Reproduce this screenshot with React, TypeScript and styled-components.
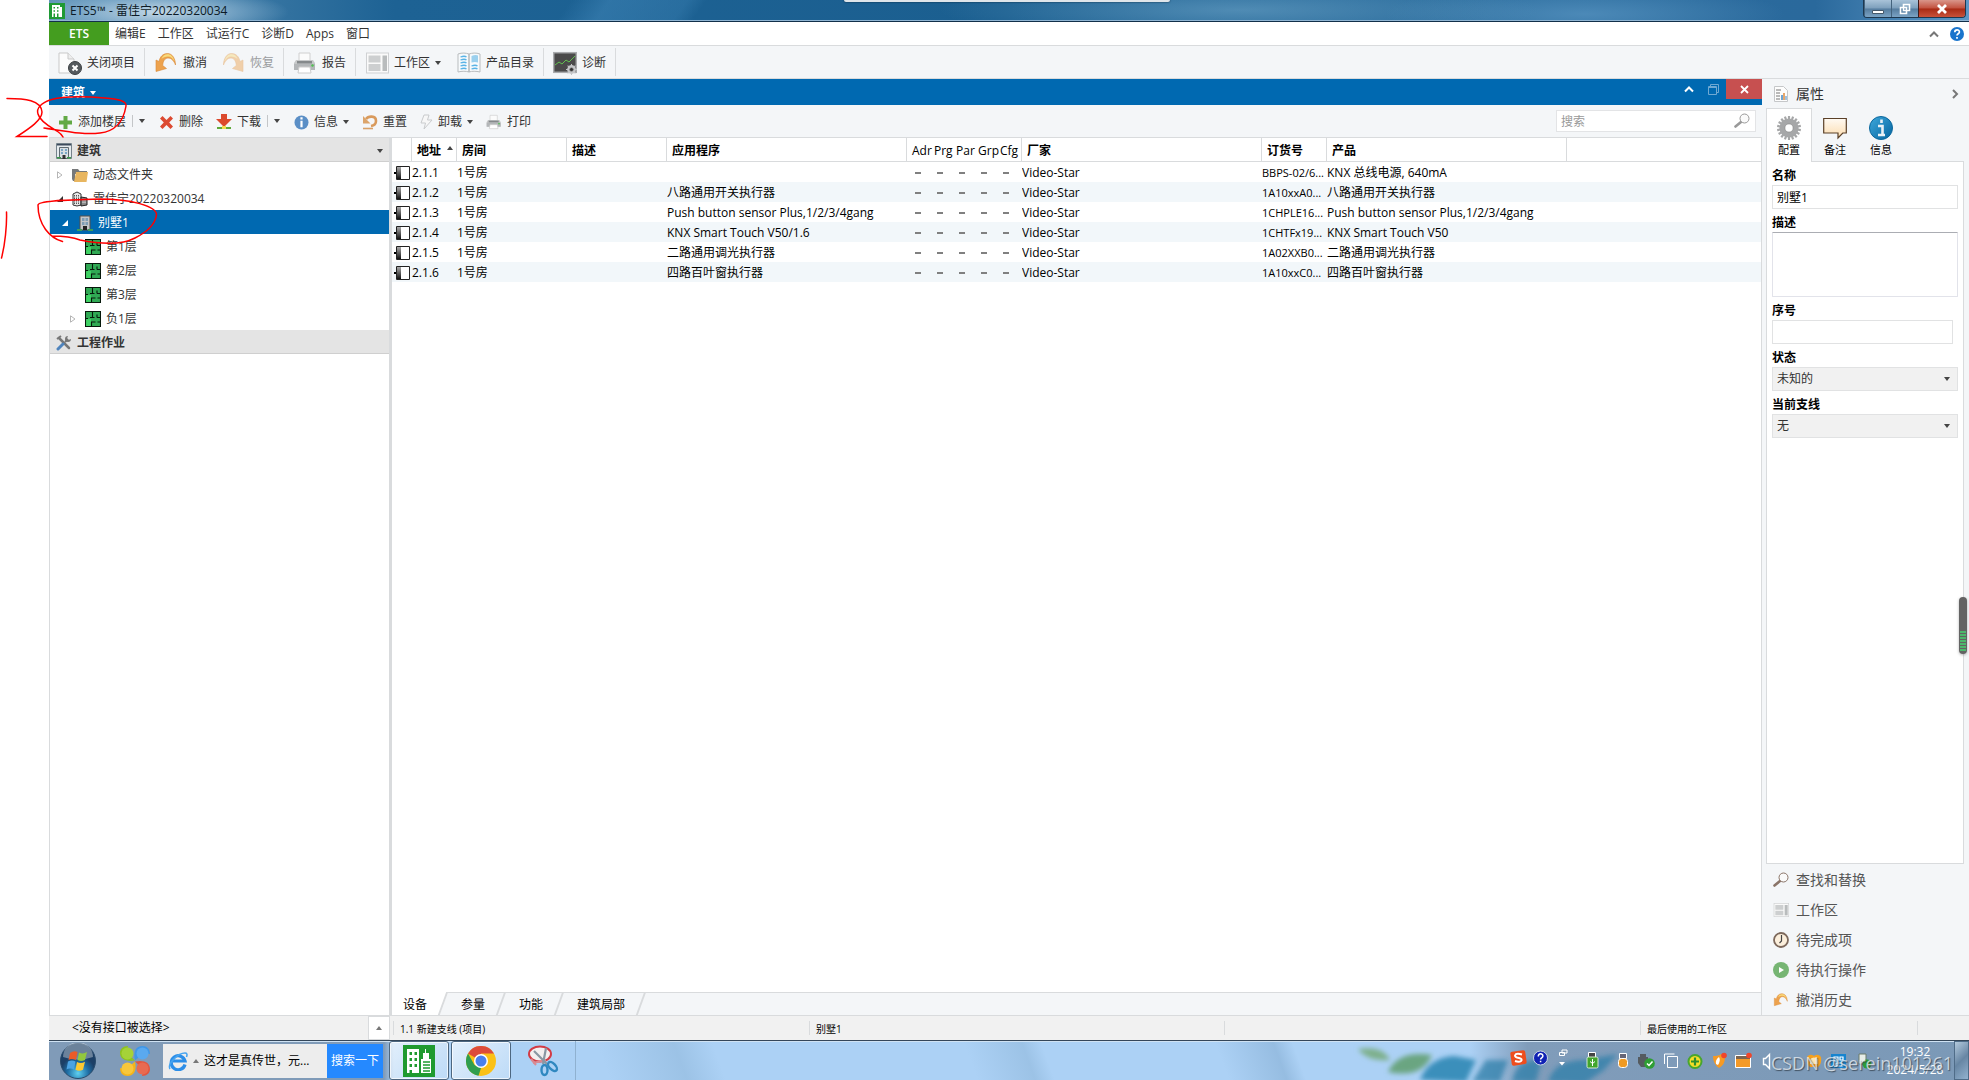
import React from 'react';
import styled, { createGlobalStyle, css } from 'styled-components';

const line = '#d9dbdd';
const panel = '#f4f6f8';
const blue = '#0069b1';

const Global = createGlobalStyle`
  * { box-sizing: border-box; }
  html, body { margin: 0; padding: 0; background: #fff; }
  body, button, input, textarea, select {
    font-family: "Open Sans", "Noto Sans CJK SC", sans-serif;
    font-size: 12px;
    line-height: 16px;
    color: #333;
  }
  button { border: 0; padding: 0; background: none; white-space: nowrap; }
  svg { display: block; flex: none; }
`;

const Page = styled.div`
  position: relative;
  display: flex;
  flex-direction: column;
  height: 100vh;
  padding-left: 49px;
  overflow: hidden;
`;

/* ---------- window frame ---------- */
const TitleBar = styled.header`
  display: flex;
  align-items: flex-start;
  flex: none;
  height: 22px;
  position: relative;
  border-bottom: 1px solid #12304a;
  box-shadow: inset 0 -1px 0 #8fb4d2;
  background:
    radial-gradient(ellipse 130px 24px at 110px 12px, rgba(215, 230, 240, .85), rgba(160, 195, 220, .5) 60%, transparent),
    linear-gradient(125deg, transparent 27%, rgba(70, 140, 190, .45) 29%, rgba(70, 140, 190, .3) 33%, transparent 34%),
    radial-gradient(ellipse 300px 30px at 62% 10px, rgba(110, 165, 200, .6), transparent),
    radial-gradient(ellipse 200px 30px at 80% 14px, rgba(90, 150, 195, .7), transparent),
    linear-gradient(90deg, #5f93b8, #1d6294 18%, #1b5f90 50%, #2a6c9d 75%, #2a699c 92%, #5d97c6);
`;
const AppTitle = styled.h1`
  display: flex;
  align-items: center;
  gap: 5px;
  margin: 0;
  padding-top: 3px;
  font-size: 12px;
  line-height: 16px;
  font-weight: 400;
  color: #0c1a26;
`;
const WindowButtons = styled.div`
  display: flex;
  height: 18px;
  margin: 0 3px 0 auto;
  border: 1px solid #1d3850;
  border-top: 0;
  border-radius: 0 0 4px 4px;
  overflow: hidden;
`;
const WindowButton = styled.button<{ $close?: boolean }>`
  display: flex;
  align-items: center;
  justify-content: center;
  width: ${p => (p.$close ? 47 : 27)}px;
  border-left: ${p => (p.$close ? '1px solid #3d1a1a' : '1px solid #44637d')};
  background: ${p => p.$close
    ? 'linear-gradient(#d9968a, #c2513e 48%, #a82a14 52%, #c8523a)'
    : 'linear-gradient(#a9c3d8, #7d9fbc 48%, #557c9e 52%, #7ba3c4)'};
`;
const RemoteTab = styled.div`
  position: absolute;
  top: 0;
  left: 41.4%;
  width: 326px;
  height: 2px;
  background: #dfe5ea;
  border-radius: 0 0 4px 4px;
  box-shadow: 0 0 2px #0b2438;
`;

/* ---------- menu + ribbon ---------- */
const MenuBar = styled.nav`
  display: flex;
  align-items: center;
  flex: none;
  height: 24px;
  border-bottom: 1px solid ${line};
`;
const EtsButton = styled.button`
  align-self: stretch;
  width: 60px;
  padding-top: 1px;
  background: #449d1f;
  color: #fff;
  font-weight: 600;
`;
const MenuItem = styled.button`padding: 0 6px;`;
const MenuItems = styled.div`display: flex;`;
const MenuEnd = styled.div`
  display: flex;
  align-items: center;
  gap: 11px;
  margin-left: auto;
  padding-right: 5px;
`;
const Ribbon = styled.div`
  display: flex;
  align-items: stretch;
  flex: none;
  height: 33px;
  padding: 2px 0;
  background: ${panel};
  border-bottom: 1px solid ${line};
`;
const Caret = styled.span`
  flex: none;
  border: 3px solid transparent;
  border-top: 4px solid #444;
  border-bottom: 0;
  width: 0;
  height: 0;
`;
const RibbonGroup = styled.div`
  display: flex;
  padding: 0 2px;
  border-right: 1px solid ${line};
`;
const RibbonButton = styled.button`
  display: flex;
  align-items: center;
  gap: 5px;
  padding: 2px 7px 0;
  &:disabled { color: #9a9c9e; }
  ${Caret} { margin-right: 2px; }
`;

/* ---------- dock ---------- */
const Dock = styled.div`
  display: grid;
  grid-template-columns: minmax(0, 1fr) 207px;
  flex: 1;
  min-height: 0;
`;
const Building = styled.main`
  display: flex;
  flex-direction: column;
  min-width: 0;
  min-height: 0;
`;
const PanelTitle = styled.div`
  display: flex;
  align-items: flex-start;
  flex: none;
  height: 26px;
  background: ${blue};
  color: #fff;
`;
const PanelName = styled.button`
  display: flex;
  align-items: center;
  gap: 5px;
  padding: 6px 12px 0;
  font-weight: 700;
  color: #fff;
  ${Caret} { border-top-color: #fff; }
`;
const PanelActions = styled.div`
  display: flex;
  align-items: center;
  margin-left: auto;
`;
const PanelAction = styled.button<{ $close?: boolean }>`
  display: flex;
  align-items: center;
  justify-content: center;
  width: ${p => (p.$close ? 36 : 25)}px;
  height: 20px;
  background: ${p => (p.$close ? '#c75050' : 'transparent')};
`;
const Tools = styled.div`
  display: flex;
  align-items: center;
  flex: none;
  height: 33px;
  padding: 0 6px 0 2px;
  background: ${panel};
  border-bottom: 1px solid ${line};
`;
const Tool = styled.button`
  display: flex;
  align-items: center;
  gap: 5px;
  padding: 2px 6px 0 7px;
`;
const Split = styled.button`
  display: flex;
  align-items: center;
  height: 12px;
  padding: 0 7px 0 6px;
  border-left: 1px solid #c4c6c8;
`;
const SearchBox = styled.label`
  display: flex;
  align-items: center;
  width: 200px;
  height: 22px;
  margin-left: auto;
  padding: 0 5px 0 4px;
  background: #fff;
  border: 1px solid #e3e4e6;
`;
const SearchInput = styled.input`
  flex: 1;
  min-width: 0;
  padding: 1px 0 0;
  border: 0;
  outline: 0;
  background: none;
  &::placeholder { color: #999; opacity: 1; }
`;
const Workspace = styled.div`
  display: grid;
  grid-template-columns: 340px 3px minmax(0, 1fr);
  flex: 1;
  min-height: 0;
`;
const Tree = styled.aside`
  border-left: 1px solid ${line};
`;
const Divider = styled.div`background: ${line};`;
const TreeHeader = styled.h2`
  display: flex;
  align-items: center;
  gap: 5px;
  height: 24px;
  margin: 0;
  padding: 2px 6px 0;
  background: #e4e4e4;
  border-bottom: 1px solid #cfcfcf;
  font-size: 12px;
  line-height: 16px;
  font-weight: 700;
  ${Caret} { margin-left: auto; }
`;
const TreeList = styled.ul`
  margin: 0;
  padding: 0;
  list-style: none;
`;
const TreeItem = styled.li<{ $level: number; $selected?: boolean }>`
  display: flex;
  align-items: center;
  gap: 5px;
  height: 24px;
  padding-top: 2px;
  padding-left: ${p => [6, 11, 19][p.$level]}px;
  ${p => p.$selected && css`background: ${blue}; color: #fff;`}
`;
const Toggle = styled.span`width: 11px;`;

const Devices = styled.section`
  display: flex;
  flex-direction: column;
  min-width: 0;
  border-right: 1px solid ${line};
`;
const TableArea = styled.div`flex: 1; min-height: 0; overflow: hidden;`;
const Table = styled.table`
  width: 100%;
  table-layout: fixed;
  border-collapse: separate;
  border-spacing: 0;
  color: #000;
  td, th { padding: 2px 0 0; text-align: left; white-space: nowrap; overflow: hidden; }
`;
const Th = styled.th<{ $plain?: boolean; $open?: boolean }>`
  height: 24px;
  border-bottom: 1px solid ${line};
  border-right: ${p => (p.$open ? '0' : `1px solid ${line}`)};
  font-weight: ${p => (p.$plain ? 400 : 700)};
  && { padding-left: 5px; overflow: visible; }
`;
const Row = styled.tr`
  height: 20px;
  &:nth-child(even) { background: #f2f7fa; }
  td:first-child svg { margin-left: 2px; }
`;
const OrderCell = styled.td`font-size: 11px;`;
const Flag = styled.td`
  && { padding-left: 8px; }
`;
const Dash = styled.span`
  display: block;
  width: 6px;
  height: 2px;
  background: #808080;
`;
const Sort = styled.span`
  display: inline-block;
  margin: 0 0 5px 6px;
  border: 3px solid transparent;
  border-bottom: 4px solid #444;
  border-top: 0;
`;
const Tabs = styled.div`
  display: flex;
  flex: none;
  height: 23px;
  background: ${panel};
  box-shadow: inset 0 1px 0 ${line};
  overflow: hidden;
`;
const Tab = styled.button<{ $active?: boolean }>`
  position: relative;
  z-index: 0;
  padding: 2px 17px 0;
  color: #000;
  &:first-child { padding-left: 11px; }
  &::before {
    content: '';
    position: absolute;
    z-index: -1;
    inset: 0 0 0 -6px;
    border-right: 2px solid ${line};
    background: ${p => (p.$active ? '#fff' : 'transparent')};
    transform: skewX(-20deg);
  }
`;

/* ---------- properties ---------- */
const Side = styled.aside`
  display: flex;
  flex-direction: column;
  min-height: 0;
  padding: 0 5px 0 4px;
  background: ${panel};
`;
const SideTitle = styled.div`
  display: flex;
  align-items: center;
  gap: 7px;
  height: 29px;
  padding: 1px 4px 0 7px;
  font-size: 14px;
  svg:last-child { margin-left: auto; }
`;
const SideTabs = styled.div`
  display: flex;
  position: relative;
  z-index: 1;
  margin-bottom: -1px;
`;
const SideTab = styled.button<{ $active?: boolean }>`
  display: flex;
  flex-direction: column;
  align-items: center;
  gap: 2px;
  width: 46px;
  height: 54px;
  padding-top: 7px;
  font-size: 11px;
  color: #000;
  border: 1px solid ${p => (p.$active ? line : 'transparent')};
  border-bottom: 0;
  background: ${p => (p.$active ? '#fff' : 'transparent')};
`;
const Form = styled.form`
  display: flex;
  flex-direction: column;
  flex: 1;
  min-height: 0;
  padding: 4px 5px 0;
  background: #fff;
  border: 1px solid ${line};
`;
const FieldLabel = styled.label`
  height: 19px;
  padding-top: 2px;
  line-height: 16px;
  font-weight: 700;
  color: #000;
`;
const box = css`
  width: 100%;
  height: 24px;
  margin: 0 0 4px;
  padding: 0 4px;
  border: 1px solid #e1e2e3;
  border-radius: 0;
  background: #fff;
  outline: 0;
  color: #000;
  flex: none;
`;
const TextField = styled.input<{ $short?: boolean }>`
  ${box}
  ${p => p.$short && css`width: calc(100% - 5px);`}
`;
const NoteField = styled.textarea`
  ${box}
  height: 65px;
  resize: none;
  border-color: #abadb3 #e2e3ea #e2e3ea;
  border-radius: 1px;
`;
const SelectWrap = styled.div`
  position: relative;
  height: 28px;
  ${Caret} {
    position: absolute;
    right: 8px;
    top: 10px;
    pointer-events: none;
  }
`;
const Select = styled.select`
  ${box}
  appearance: none;
  background: #f1f1f1;
  color: #333;
`;
const SideLinks = styled.nav`
  display: flex;
  flex-direction: column;
  padding-top: 1px;
`;
const SideLink = styled.button`
  display: flex;
  align-items: center;
  gap: 7px;
  height: 30px;
  padding-left: 7px;
  font-size: 14px;
  color: #555;
`;

/* ---------- status bar ---------- */
const Status = styled.footer`
  display: flex;
  flex: none;
  height: 25px;
  background: #f1f1f1;
  border-top: 1px solid ${line};
  color: #000;
`;
const Interface = styled.div`
  display: flex;
  align-items: center;
  width: 344px;
  padding-left: 23px;
`;
const UpButton = styled.button`
  display: flex;
  align-items: center;
  justify-content: center;
  width: 22px;
  height: 24px;
  margin: 0 3px 0 auto;
  background: #fff;
  border: 1px solid ${line};
`;
const UpCaret = styled.span`
  border: 3px solid transparent;
  border-bottom: 4px solid #777;
  border-top: 0;
`;
const StatusCell = styled.div<{ $w: number }>`
  flex: ${p => p.$w} 1 0;
  height: 14px;
  margin-top: 5px;
  padding-left: 6px;
  border-left: 1px solid ${line};
  font-size: 10px;
  line-height: 16px;
  white-space: nowrap;
`;

/* ---------- taskbar ---------- */
const Taskbar = styled.footer`
  position: relative;
  display: flex;
  align-items: center;
  flex: none;
  height: 40px;
  border-top: 1px solid #344659;
  box-shadow: inset 0 1px 0 #cfe2f3;
  background:
    linear-gradient(90deg, #809bb8 335px, transparent 345px),
    linear-gradient(70deg, transparent 29%, rgba(140, 180, 215, .5) 33%, transparent 35%),
    linear-gradient(70deg, transparent 48%, rgba(140, 180, 215, .5) 51%, transparent 52%),
    linear-gradient(70deg, transparent 61%, rgba(135, 175, 212, .6) 64%, transparent 65%),
    linear-gradient(90deg, #acd1f5 74%, #809cba 77%, #7b99b7);
`;
const Scenery = styled.svg`
  position: absolute;
  top: 1px;
  right: 0;
`;
const Launchers = styled.div`
  position: relative;
  display: flex;
  align-items: center;
`;
const IconButton = styled.button`display: flex; justify-content: center; width: 57px;`;
const NewsBar = styled.div`
  display: flex;
  align-items: center;
  width: 220px;
  height: 34px;
  margin-right: 6px;
  background: #ededed;
  color: #000;
`;
const NewsText = styled.a`
  display: flex;
  align-items: center;
  gap: 5px;
  flex: 1;
  padding-left: 5px;
  color: #000;
  text-decoration: none;
  white-space: nowrap;
`;
const NewsButton = styled.button`
  width: 56px;
  height: 34px;
  background: #2589ff;
  color: #fff;
`;
const TaskButton = styled.button<{ $open?: boolean }>`
  display: flex;
  align-items: center;
  justify-content: center;
  width: 60px;
  height: 39px;
  margin-right: 2px;
  ${p => p.$open && css`
    border: 1px solid #4d6780;
    border-radius: 3px;
    box-shadow: inset 0 0 0 1px rgba(255, 255, 255, .7);
    background: linear-gradient(135deg, rgba(255, 255, 255, .65), rgba(220, 236, 250, .35));
  `}
`;
const Running = styled.div`
  position: relative;
  display: flex;
  border-right: 1px solid #8fb1d0;
`;
const Tray = styled.div`
  position: relative;
  display: flex;
  align-items: center;
  height: 100%;
  margin-left: auto;
`;
const Clock = styled.time`
  width: 78px;
  text-align: center;
  color: #fff;
  line-height: 18px;
`;
const ShowDesktop = styled.button`
  width: 15px;
  height: 100%;
  border: 1px solid #4f6c88;
  background: linear-gradient(135deg, #b3c9dd, #6786a4 50%, #93b2cf);
`;
const Watermark = styled.div`
  position: absolute;
  right: 16px;
  bottom: 5px;
  font-size: 18px;
  line-height: 24px;
  color: rgba(235, 240, 245, .75);
  text-shadow: 1px 1px 1px rgba(40, 50, 60, .7);
`;
const Ink = styled.svg`
  position: absolute;
  left: 0;
  top: 0;
  pointer-events: none;
`;
const Meter = styled.div`
  position: absolute;
  right: 2px;
  top: 597px;
  width: 8px;
  height: 57px;
  border-radius: 4px;
  background:
    repeating-linear-gradient(transparent 0 2px, #636363 2px 3px) 1px 34px / 6px 20px no-repeat,
    linear-gradient(#4cb76b, #4cb76b) 1px 34px / 6px 20px no-repeat,
    #636363;
  box-shadow: 0 1px 3px rgba(0, 0, 0, .3);
`;

/* ---------- icons ---------- */
const EtsLogo = ({ size = 16 }: { size?: number }) => (
  <svg width={size} height={size} viewBox="0 0 16 16">
    <rect width="16" height="16" fill="#1f9a35" />
    <path fill="#fff" fillRule="evenodd" d="M3 2h8v2h2v10H3zM4.500 4v1.500h1.500V4zm3.500 0v1.500h1.500V4zM4.500 7.200v1.500h1.500V7.200zm3.500 0v1.500h1.500V7.200zM4.500 10.500V14h1.500v-3.500zM8 10.500V14h1.500v-3.500z" />
  </svg>
);
const EtsLarge = () => (
  <svg width="32" height="32" viewBox="0 0 32 32">
    <rect width="32" height="32" fill="#1f9a2f" />
    <path fill="#fff" fillRule="evenodd" d="M4 4h12v24H4zM6.500 7v3h2.500V7zm5 0v3H14V7zm-5 6v3h2.500v-3zm5 0v3H14v-3zm-5 6v3h2.500v-3zm5 0v3H14v-3zm-5 6v3h2.500v-3zM22 4h1v4h3v6h2v14H18V14h2V8h2z" />
    <path stroke="#1f9a2f" strokeWidth="1.500" d="M20 17h7M20 20h7M20 23h7M20 26h7" />
  </svg>
);
const CloseProject = () => (
  <svg width="24" height="24" viewBox="0 0 24 24">
    <path d="M1 2h9l6 6v14H1z" fill="#fcfcfc" stroke="#c9c9c9" />
    <path d="M10 2v6h6" fill="#eee" stroke="#c9c9c9" />
    <circle cx="17" cy="17" r="6.500" fill="#555a5e" stroke="#3c4043" />
    <path d="M14.500 14.500l5 5m0-5l-5 5" stroke="#fff" strokeWidth="2" />
  </svg>
);
const UndoIcon = ({ s = 24, flip, faded }: { s?: number; flip?: boolean; faded?: boolean }) => (
  <svg width={s} height={s} viewBox="0 0 24 24" opacity={faded ? 0.45 : 1}>
    <g transform={flip ? 'matrix(-1 0 0 1 24 0)' : undefined}>
      <path d="M21.500 14c0-6-3-11.500-8-11.500-4.500 0-7.500 3-8.500 8L2 9v11.500l10.500-3-3.800-3c.3-4.500 2.300-7.500 5.300-7.500 3.500 0 6 3 7.500 7z" fill="#eda24d" stroke="#d98a35" strokeWidth=".6" />
      <path d="M7.500 8c1-3 3-4.700 6-4.700 3.500 0 6 2.700 7 7.200-1.500-3-3.500-5-6.500-5S9 6.500 7.500 8z" fill="#f8dc7c" />
    </g>
  </svg>
);
const Printer = ({ s = 24 }: { s?: number }) => (
  <svg width={s} height={s} viewBox="0 0 24 24">
    <path d="M6 2h11v8H6z" fill="#fbfbfb" stroke="#d0d0d0" />
    <path d="M3 9h17l2 3v7H1v-7z" fill="#c6c8c9" />
    <path d="M1 13h21v6H1z" fill="#b3b6b8" />
    <path d="M4 10h15v2.500H4z" fill="#85898b" />
    <circle cx="19.500" cy="14.500" r="1.200" fill="#4ec04e" />
    <path d="M6 16h11l1 6H5z" fill="#fff" stroke="#ccc" />
  </svg>
);
const LayoutIcon = ({ s = 24 }: { s?: number }) => (
  <svg width={s} height={s} viewBox="0 0 24 24">
    <rect x="1.500" y="2" width="22" height="20" fill="#fafafa" stroke="#cfd1d3" />
    <path d="M3.500 4.500h12v7h-12zM3.500 13h12v7h-12z" fill="#cdcfd0" />
    <path d="M17.500 4.500h4.500v15.500h-4.500z" fill="#b9bcbd" />
  </svg>
);
const Catalog = () => (
  <svg width="24" height="24" viewBox="0 0 24 24">
    <path d="M1 3c4-1.500 8-1 11 0 3-1 7-1.500 11 0v18c-4-1-8-1-11 0-3-1-7-1-11 0z" fill="#f7fafc" stroke="#b9bcbe" />
    <path d="M12 3v18" stroke="#b5b8ba" strokeWidth="1.500" />
    <path d="M3.500 6q4-1.500 6 0M3.500 9q4-1.500 6 0M3.500 12q4-1.500 6 0M3.500 15q4-1.500 6 0M3.500 18q4-1.500 6 0M14.500 15q4-1.500 6 0M14.500 18q4-1.500 6 0" fill="none" stroke="#59b3e6" strokeWidth="1.300" />
    <path d="M14.500 5q4-1.500 6.500-.5v7q-3-1-6.500 0z" fill="#9bd0ee" />
  </svg>
);
const GearShape = ({ cx, cy, r, fill, hole, teeth = 12 }: { cx: number; cy: number; r: number; fill: string; hole: string; teeth?: number }) => (
  <g>
    {Array.from({ length: teeth }, (_, i) => (
      <rect key={i} x={cx - r * 0.09} y={cy - r} width={r * 0.18} height={r * 0.4} fill={fill} transform={`rotate(${(i * 360) / teeth} ${cx} ${cy})`} />
    ))}
    <circle cx={cx} cy={cy} r={r * 0.8} fill={fill} />
    <circle cx={cx} cy={cy} r={r * 0.34} fill={hole} stroke="#888" strokeWidth=".6" />
  </g>
);
const Diagnose = () => (
  <svg width="24" height="24" viewBox="0 0 24 24">
    <rect x=".7" y="1.700" width="22.600" height="19.600" fill="#4a4a4a" stroke="#a9abad" strokeWidth="1.500" />
    <path d="M2 14l4-3 3 2 4-4 3 2 6-6" fill="none" stroke="#62c050" />
    <GearShape cx={18.5} cy={18.5} r={5.5} fill="#c4c6c8" hole="#333" teeth={8} />
  </svg>
);
const Plus = () => (
  <svg width="15" height="15" viewBox="0 0 15 15"><path d="M5.500 1h4v4.500H14v4H9.500V14h-4V9.500H1v-4h4.500z" fill="#62a945" /></svg>
);
const Cross = () => (
  <svg width="15" height="15" viewBox="0 0 15 15"><path d="M3.500 1L7.500 5l4-4L14 3.500l-3.800 4L14 11.500 11.500 14l-4-4-4 4L1 11.500l3.800-4L1 3.500z" fill="#dc4a31" /></svg>
);
const Download = () => (
  <svg width="16" height="16" viewBox="0 0 16 16">
    <path d="M5 0h6v5h5l-8 8-8-8h5z" fill="#dc4a2e" />
    <path d="M1 14h14" stroke="#5faa3c" strokeWidth="2" /><path d="M6 12h4v3H6z" fill="#f1de50" />
  </svg>
);
const InfoSmall = () => (
  <svg width="15" height="15" viewBox="0 0 15 15"><circle cx="7.500" cy="7.500" r="7" fill="#5b8fc6" /><path d="M7.500 2.200v2.200M7.500 5.800v6.500" stroke="#fff" strokeWidth="2.200" /></svg>
);
const Reset = () => (
  <svg width="16" height="16" viewBox="0 0 16 16"><path d="M1 14.500h10" stroke="#d9a066" strokeWidth="1.600" /><path d="M4 5c2-3 10-4 10 2 0 3-2 4.500-5 5" fill="none" stroke="#d99a5c" strokeWidth="2.600" /><path d="M1 2v7.500h7.500z" fill="#dca46a" /></svg>
);
const Bolt = () => (
  <svg width="13" height="16" viewBox="0 0 13 16"><path d="M4 1h5L7.500 6H12L4 15l1.500-6H1z" fill="#f7f7f7" stroke="#c9cbcd" /></svg>
);
const Magnifier = ({ tint = '#999' }: { tint?: string }) => (
  <svg width="16" height="16" viewBox="0 0 16 16"><path d="M1.500 13.500L7 9" stroke={tint} strokeWidth="2.600" strokeLinecap="round" /><circle cx="10.500" cy="5.500" r="4.500" fill="#fafafa" stroke={tint} /></svg>
);
const Chevron = ({ dir, c = '#777' }: { dir: 'up' | 'right'; c?: string }) => (
  <svg width="10" height="10" viewBox="0 0 10 10"><path d={dir === 'up' ? 'M1 7.500L5 3.500l4 4' : 'M3 1l4 4-4 4'} fill="none" stroke={c} strokeWidth="2" /></svg>
);
const Help = () => (
  <svg width="14" height="14" viewBox="0 0 14 14"><circle cx="7" cy="7" r="7" fill="#1a74cc" /><path d="M4.800 5.200c0-3 4.600-3 4.600-.3C9.400 6.700 7 6.700 7 8.500M7 10v1.800" fill="none" stroke="#fff" strokeWidth="1.700" /></svg>
);
const BuildingFrame = () => (
  <svg width="16" height="16" viewBox="0 0 16 16">
    <path d="M.5.500h15v15H.5z" fill="#e6ebee" stroke="#75828b" /><path d="M1 1h14v1.500H1z" fill="#3c4a5c" />
    <path d="M3.500 4.500h9v11h-9z" fill="#d8dee2" stroke="#5f6a72" /><path d="M5 6h2v2H5zm4 0h2v2H9zM5 9h2v2H5zm4 0h2v2H9z" fill="#7ba7c7" />
    <path d="M6.500 12h3v4h-3z" fill="#333" /><path d="M1 14h4v1.500H1zm10 0h4v1.500h-4z" fill="#3c9a4a" />
  </svg>
);
const Tower = () => (
  <svg width="16" height="16" viewBox="0 0 16 16">
    <path d="M3 1h10v14H3z" fill="#c3c6c9" stroke="#55504c" /><path d="M5 3h2.500v3H5zm3.500 0H11v3H8.500zM5 7h2.500v3H5zm3.500 0H11v3H8.500z" fill="#7e9db5" />
    <path d="M6 11h4v4H6z" fill="#222" /><path d="M0 14h5v2H0zm11 0h5v2h-5z" fill="#3e9c5c" />
  </svg>
);
const City = () => (
  <svg width="16" height="16" viewBox="0 0 16 16">
    <path d="M1 3l4-2 4 2v11l-4 1-4-1z" fill="#e8e8e8" stroke="#333" /><path d="M9 6l6 1v7l-6 1z" fill="#8a8a8a" stroke="#222" />
    <path d="M2.500 4v9M4.500 4v9M6.500 4v9" stroke="#555" strokeDasharray="1.500 1" /><path d="M11 8v5M13 8v5" stroke="#ddd" strokeDasharray="1.500 1" />
  </svg>
);
const Folder = () => (
  <svg width="16" height="16" viewBox="0 0 16 16"><path d="M0 2h6l1.500 2H15v3H3v7H1L0 12z" fill="#77797a" /><path d="M4 5h12l-1.500 10H2z" fill="#e8b660" /></svg>
);
const Floor = () => (
  <svg width="16" height="16" viewBox="0 0 16 16">
    <path d="M.5.500h15v15H.5z" fill="#30a954" /><path d="M1 8h5v7H1z" fill="#3fd264" />
    <path d="M.5.500h15v15H.5zM7.500 0v6M0 7.500h3M5 6.500h4.500M12 6.500h4M12 6.500V3.500M6.500 16v-5h4M12.500 11H16" fill="none" stroke="#06180b" strokeWidth="1.100" />
  </svg>
);
const ToolsIcon = () => (
  <svg width="16" height="16" viewBox="0 0 16 16"><path d="M3 3l10 10" stroke="#777" strokeWidth="2.500" strokeLinecap="round" /><path d="M1 4l4-3M9 7l3-3" stroke="#777" strokeWidth="2" /><path d="M12 1a3 3 0 103 3l-2.500 1-1.500-1.500z" fill="#777" /><path d="M7 9l-5 5" stroke="#4f84bd" strokeWidth="3" strokeLinecap="round" /></svg>
);
const Arrow = ({ open, white }: { open?: boolean; white?: boolean }) => (
  <svg width="8" height="8" viewBox="0 0 8 8">
    {open ? <path d="M7 1v6H1z" fill={white ? '#fff' : '#333'} /> : <path d="M1.500.8v6.400L6 4z" fill="#fff" stroke="#b5b5b5" />}
  </svg>
);
const DeviceIcon = () => (
  <svg width="16" height="14" viewBox="0 0 16 14">
    <defs><linearGradient id="dev" x2="0" y2="1"><stop stopColor="#aaa" /><stop offset="1" stopColor="#111" /></linearGradient></defs>
    <path d="M0 7h3" stroke="#000" strokeWidth="2" /><path d="M2.500.500h13v13h-13z" fill="#fff" stroke="#222" /><path d="M3 1h4v12H3z" fill="url(#dev)" />
  </svg>
);
const Report = () => (
  <svg width="16" height="16" viewBox="0 0 16 16"><path d="M1.500.500h9l4 4v11h-13z" fill="#fdfdfd" stroke="#c5c7c9" /><path d="M3 4h5M3 7h4M3 10h4M3 13h4" stroke="#777" /><path d="M9 14V9" stroke="#3f87c5" strokeWidth="1.500" /><path d="M11 14V7" stroke="#e08a3a" strokeWidth="1.500" /><path d="M13 14v-4" stroke="#3f87c5" /></svg>
);
const BigGear = () => <svg width="24" height="24" viewBox="0 0 24 24"><GearShape cx={12} cy={12} r={12} fill="#a6a7a8" hole="#fff" teeth={18} /></svg>;
const Note = () => (
  <svg width="24" height="24" viewBox="0 0 24 24">
    <defs><linearGradient id="note" x2="0" y2="1"><stop stopColor="#fffaf3" /><stop offset="1" stopColor="#fcdcae" /></linearGradient></defs>
    <path d="M.7 2.500h22.600v14.500h-3.500L15 22v-5H.7z" fill="url(#note)" stroke="#5a4028" strokeWidth="1.200" />
  </svg>
);
const InfoBig = () => (
  <svg width="24" height="24" viewBox="0 0 24 24">
    <defs><linearGradient id="inf" x2="1" y2="1"><stop stopColor="#3fa9dc" /><stop offset="1" stopColor="#04649f" /></linearGradient></defs>
    <circle cx="12" cy="12" r="11.500" fill="url(#inf)" stroke="#0b679d" /><path d="M12.500 3.500v3.500M9 10h4.500v9M9 19h7" stroke="#e9f1f6" strokeWidth="2.600" fill="none" />
  </svg>
);
const ClockIcon = () => (
  <svg width="16" height="16" viewBox="0 0 16 16"><circle cx="8" cy="8" r="7" fill="#fcefdc" stroke="#7d695c" strokeWidth="1.800" /><path d="M8.500 3v6L6.500 11" fill="none" stroke="#444" strokeWidth="1.200" /></svg>
);
const PlayIcon = () => (
  <svg width="16" height="16" viewBox="0 0 16 16"><circle cx="8" cy="8" r="8" fill="#76b573" /><path d="M6 5l5 3-5 3z" fill="#fff" /></svg>
);
const StartOrb = () => (
  <svg width="36" height="36" viewBox="0 0 36 36">
    <defs><radialGradient id="orb" cy=".85"><stop stopColor="#5fd0f0" /><stop offset=".6" stopColor="#1e6ea5" /><stop offset="1" stopColor="#1c3f66" /></radialGradient></defs>
    <circle cx="18" cy="18" r="17.500" fill="url(#orb)" stroke="#294b6b" /><path d="M3 14a15 15 0 0130 0q-15 5-30 0z" fill="#fff" opacity=".35" />
    <path d="M10 10q4-3 7.500-1l-1.500 8q-4-2-7.500 0z" fill="#ea5b28" /><path d="M19 9.500q4 2 8-.5l-2 8q-4 2-7.500 0z" fill="#92c83e" />
    <path d="M8 18.500q4-2 7.500 0l-1.500 8q-4-2-7.500 0z" fill="#4ba3e3" /><path d="M17 19q4 2 8-.3l-2 8q-4 2-7.500 0z" fill="#fbc932" />
  </svg>
);
const Petals = () => (
  <svg width="32" height="32" viewBox="0 0 32 32">
    <path d="M16 15.500C7 17 1 14 1 8c0-4 3-7 8-7-2 6 1 9 7 14.500z" fill="#8fc31f" />
    <path d="M16 15.500C14 6 17 1 23.500 1 28 1 31 4 31 9c-6-2-9 1-15 6.500z" fill="#3f97e8" />
    <path d="M16 16.500c2 9-1 14.500-7.500 14.500C4 31 1 28 1 23c6 2 9-1 15-6.500z" fill="#f4b41a" />
    <path d="M16 16.500c9-2 15 1 15 7.500 0 4-3 7-8 7 2-6-1-9-7-14.500z" fill="#e2563e" />
    <circle cx="8.500" cy="8.500" r="6" fill="#a5d238" /><circle cx="23.500" cy="8.500" r="6" fill="#5aa9ef" /><circle cx="8.500" cy="23.500" r="6" fill="#f8c73c" /><circle cx="23.500" cy="23.500" r="6" fill="#e86a50" />
  </svg>
);
const IeIcon = () => (
  <svg width="20" height="20" viewBox="0 0 20 20"><path d="M17 13.500A7 7 0 1117 10H5" fill="none" stroke="#2c8ee8" strokeWidth="3.200" /><path d="M2 18C-1 13 10 2 17 2q3 0 1.500 4" fill="none" stroke="#46a4f0" strokeWidth="1.500" /></svg>
);
const ChromeIcon = () => (
  <svg width="30" height="30" viewBox="0 0 30 30">
    <circle cx="15" cy="15" r="15" fill="#fbc116" /><path d="M15 15L2 7.500A15 15 0 0128 7.500H15z" fill="#dd4b3a" /><path d="M2 7.500L8.500 19 15 22l-2.500 7.800A15 15 0 012 7.500z" fill="#2f9e4f" />
    <circle cx="15" cy="15" r="7" fill="#fff" /><circle cx="15" cy="15" r="5.500" fill="#4a80ec" />
  </svg>
);
const Snip = () => (
  <svg width="32" height="32" viewBox="0 0 32 32">
    <ellipse cx="13" cy="9" rx="11" ry="7.500" fill="#f3eff0" stroke="#d33b45" strokeWidth="2" /><path d="M4 14l5 6M6 18l13-3" stroke="#d98a92" strokeWidth="2" />
    <path d="M7 6l14 14M19 3l-3 16" stroke="#8a97a3" strokeWidth="2.200" /><ellipse cx="17.500" cy="25" rx="3" ry="5" fill="none" stroke="#3088c0" strokeWidth="2.400" /><ellipse cx="25.500" cy="21.500" rx="3" ry="5.500" fill="none" stroke="#3088c0" strokeWidth="2.400" transform="rotate(-45 25.500 21.500)" />
  </svg>
);

const Notifications = () => (
  <svg width="368" height="39" viewBox="1508 1041 368 39">
    <rect x="1511" y="1051" width="15" height="14" rx="2" fill="#ee4d1d" transform="rotate(-8 1518 1058)" />
    <path d="M1522 1054.500q-6-2-7 1 0 2 4 2.500 4 1 2 3-2 1.500-6 0" fill="none" stroke="#fff" strokeWidth="2" />
    <circle cx="1540.500" cy="1058" r="7" fill="#1022b4" stroke="#c9d3e4" /><path d="M1538.300 1056.500c0-3.500 4.600-3.500 4.600-.4 0 1.800-2.300 1.800-2.300 3.400m0 1.200v1.600" fill="none" stroke="#fff" strokeWidth="1.500" />
    <path d="M1562 1050h5v3h-5zM1559.500 1052.500h5v3h-5z" fill="#8099b3" stroke="#fff" /><path d="M1559 1062h6l-3 3.500z" fill="#fff" />
    <path d="M1588.500 1052.500h7v5h-7z" fill="#444" stroke="#fff" /><rect x="1587" y="1057" width="11" height="11" rx="1.500" fill="#42a52c" stroke="#d5e8d0" /><path d="M1592.500 1066v-7m-2.500 2.500l2.500 2 2.500-2" fill="none" stroke="#fff" />
    <path d="M1619.500 1053.500h7v5h-7z" fill="#667" stroke="#fff" /><rect x="1618.500" y="1058.500" width="9" height="9" rx="3" fill="#f09a22" stroke="#fff" />
    <path d="M1640 1054h6v3h2v6l-3 4h-4l-3-4v-6h2z" fill="#555b60" /><circle cx="1649.500" cy="1063.500" r="5.300" fill="#2e9e34" /><path d="M1647 1063.500l2 2 3.500-4" fill="none" stroke="#fff" strokeWidth="1.500" />
    <path d="M1664.500 1064v-10h10M1667.500 1056.500h10v11h-10z" fill="none" stroke="#fff" />
    <circle cx="1695" cy="1061.500" r="6.500" fill="#f6de27" stroke="#48a62e" strokeWidth="2" /><path d="M1695 1057.500v8m-4-4h8" stroke="#2d8f2d" strokeWidth="2.200" />
    <path d="M1713 1056q6 0 8-2l4 3q0 8-6 11-6-4-6-12z" fill="#f69a24" /><path d="M1716 1064q-1-4 3-7 2 3-1 8z" fill="#fff" /><circle cx="1724" cy="1055.500" r="2.800" fill="#f0452a" />
    <path d="M1735.500 1055.500h15v12h-15z" fill="#f49a28" stroke="#fff" /><path d="M1736 1056h14v3h-14z" fill="#7b6450" /><circle cx="1749" cy="1055.500" r="2.800" fill="#f0452a" />
    <path d="M1763.500 1058.500h2l4-4v14l-4-4h-2z" fill="none" stroke="#fff" strokeWidth="1.400" />
    <path d="M1807 1057q3-4 7-1 4-3 7 1 1 7-3 10h-8q-4-3-3-10z" fill="#f8a11c" /><path d="M1810 1059q4-3 8 0v5h-8z" fill="#fce6b0" />
    <rect x="1831" y="1054" width="15" height="14" fill="#1784cf" /><path d="M1834 1057h4v4h-4zm6 0h3v3h-3zm-4 6h6v3h-6z" fill="none" stroke="#fff" strokeWidth="1.200" />
    <path d="M1859 1054h7v10h-7z" fill="#e8eee8" stroke="#6a7a6a" /><circle cx="1867" cy="1064" r="4.500" fill="#2f9d3a" />
  </svg>
);

const devices = [
  ['2.1.1', '', 'BBPS-02/6...', 'KNX 总线电源, 640mA'],
  ['2.1.2', '八路通用开关执行器', '1A10xxA0...', '八路通用开关执行器'],
  ['2.1.3', 'Push button sensor Plus,1/2/3/4gang', '1CHPLE16...', 'Push button sensor Plus,1/2/3/4gang'],
  ['2.1.4', 'KNX Smart Touch V50/1.6', '1CHTFx19...', 'KNX Smart Touch V50'],
  ['2.1.5', '二路通用调光执行器', '1A02XXB0...', '二路通用调光执行器'],
  ['2.1.6', '四路百叶窗执行器', '1A10xxC0...', '四路百叶窗执行器'],
];
const flags = ['Adr', 'Prg', 'Par', 'Grp', 'Cfg'];
const columnWidths = [20, 45, 110, 100, 240, 22, 22, 22, 22, 27, 240, 65, 240];

export default function App() {
  return (
    <Page>
      <Global />
      <TitleBar>
        <AppTitle><EtsLogo />ETS5™ - 雷佳宁20220320034</AppTitle>
        <RemoteTab />
        <WindowButtons>
          <WindowButton aria-label="最小化"><svg width="12" height="12"><path d="M.5 7.500h11v3H.5z" fill="#fff" stroke="#45586a" /></svg></WindowButton>
          <WindowButton aria-label="还原"><svg width="12" height="12"><path d="M4.500 1.500h6v6h-6zM1.500 4.500h6v6h-6z" fill="none" stroke="#fff" strokeWidth="1.600" /></svg></WindowButton>
          <WindowButton $close aria-label="关闭"><svg width="12" height="12"><path d="M2 2l8 8m0-8l-8 8" stroke="#fff" strokeWidth="2.800" /></svg></WindowButton>
        </WindowButtons>
      </TitleBar>

      <MenuBar>
        <EtsButton>ETS</EtsButton>
        <MenuItems>
          {['编辑E', '工作区', '试运行C', '诊断D', 'Apps', '窗口'].map(m => <MenuItem key={m}>{m}</MenuItem>)}
        </MenuItems>
        <MenuEnd>
          <Chevron dir="up" />
          <Help />
        </MenuEnd>
      </MenuBar>

      <Ribbon>
        <RibbonGroup><RibbonButton><CloseProject />关闭项目</RibbonButton></RibbonGroup>
        <RibbonGroup>
          <RibbonButton><UndoIcon />撤消</RibbonButton>
          <RibbonButton disabled><UndoIcon flip faded />恢复</RibbonButton>
        </RibbonGroup>
        <RibbonGroup><RibbonButton><Printer />报告</RibbonButton></RibbonGroup>
        <RibbonGroup>
          <RibbonButton><LayoutIcon />工作区<Caret /></RibbonButton>
          <RibbonButton><Catalog />产品目录</RibbonButton>
        </RibbonGroup>
        <RibbonGroup><RibbonButton><Diagnose />诊断</RibbonButton></RibbonGroup>
      </Ribbon>

      <Dock>
        <Building>
          <PanelTitle>
            <PanelName>建筑<Caret /></PanelName>
            <PanelActions>
              <PanelAction aria-label="折叠"><Chevron dir="up" c="#fff" /></PanelAction>
              <PanelAction aria-label="还原面板"><svg width="11" height="11"><path d="M2.500 2.500v-2h8v8h-2M.5 2.500h8v8h-8zM.5 3.500h8" fill="none" stroke="#6fa9d3" /></svg></PanelAction>
              <PanelAction $close aria-label="关闭面板"><svg width="9" height="9"><path d="M1 1l7 7m0-7L1 8" stroke="#fff" strokeWidth="1.800" /></svg></PanelAction>
            </PanelActions>
          </PanelTitle>
          <Tools>
            <Tool><Plus />添加楼层</Tool>
            <Split aria-label="添加选项"><Caret /></Split>
            <Tool><Cross />删除</Tool>
            <Tool><Download />下载</Tool>
            <Split aria-label="下载选项"><Caret /></Split>
            <Tool><InfoSmall />信息<Caret /></Tool>
            <Tool><Reset />重置</Tool>
            <Tool><Bolt />卸载<Caret /></Tool>
            <Tool><Printer s={16} />打印</Tool>
            <SearchBox><SearchInput placeholder="搜索" aria-label="搜索" /><Magnifier /></SearchBox>
          </Tools>
          <Workspace>
            <Tree>
              <TreeHeader><BuildingFrame />建筑<Caret /></TreeHeader>
              <TreeList>
                <TreeItem $level={0}><Toggle><Arrow /></Toggle><Folder />动态文件夹</TreeItem>
                <TreeItem $level={0}><Toggle><Arrow open /></Toggle><City />雷佳宁20220320034</TreeItem>
                <TreeItem $level={1} $selected><Toggle><Arrow open white /></Toggle><Tower />别墅1</TreeItem>
                {['第1层', '第2层', '第3层'].map(f => <TreeItem key={f} $level={2}><Toggle /><Floor />{f}</TreeItem>)}
                <TreeItem $level={2}><Toggle><Arrow /></Toggle><Floor />负1层</TreeItem>
              </TreeList>
              <TreeHeader><ToolsIcon />工程作业</TreeHeader>
            </Tree>
            <Divider />
            <Devices>
              <TableArea>
                <Table>
                  <colgroup>
                    {columnWidths.map((w, i) => <col key={i} style={{ width: w }} />)}
                    <col />
                  </colgroup>
                  <thead>
                    <tr>
                      <Th />
                      <Th>地址<Sort /></Th>
                      <Th>房间</Th>
                      <Th>描述</Th>
                      <Th>应用程序</Th>
                      {flags.map((f, i) => <Th key={f} $plain $open={i < 4}>{f}</Th>)}
                      <Th>厂家</Th>
                      <Th>订货号</Th>
                      <Th>产品</Th>
                      <Th $open />
                    </tr>
                  </thead>
                  <tbody>
                    {devices.map(([addr, app, order, product]) => (
                      <Row key={addr}>
                        <td><DeviceIcon /></td>
                        <td>{addr}</td>
                        <td>1号房</td>
                        <td />
                        <td>{app}</td>
                        {flags.map(f => <Flag key={f}><Dash /></Flag>)}
                        <td>Video-Star</td>
                        <OrderCell>{order}</OrderCell>
                        <td>{product}</td>
                        <td />
                      </Row>
                    ))}
                  </tbody>
                </Table>
              </TableArea>
              <Tabs>
                <Tab $active>设备</Tab>
                <Tab>参量</Tab>
                <Tab>功能</Tab>
                <Tab>建筑局部</Tab>
              </Tabs>
            </Devices>
          </Workspace>
        </Building>

        <Side>
          <SideTitle><Report />属性<Chevron dir="right" /></SideTitle>
          <SideTabs>
            <SideTab $active><BigGear />配置</SideTab>
            <SideTab><Note />备注</SideTab>
            <SideTab><InfoBig />信息</SideTab>
          </SideTabs>
          <Form>
            <FieldLabel htmlFor="name">名称</FieldLabel>
            <TextField id="name" defaultValue="别墅1" />
            <FieldLabel htmlFor="desc">描述</FieldLabel>
            <NoteField id="desc" />
            <FieldLabel htmlFor="num">序号</FieldLabel>
            <TextField id="num" $short />
            <FieldLabel htmlFor="state">状态</FieldLabel>
            <SelectWrap><Select id="state"><option>未知的</option></Select><Caret /></SelectWrap>
            <FieldLabel htmlFor="line">当前支线</FieldLabel>
            <SelectWrap><Select id="line"><option>无</option></Select><Caret /></SelectWrap>
          </Form>
          <SideLinks>
            <SideLink><Magnifier tint="#8a7468" />查找和替换</SideLink>
            <SideLink><LayoutIcon s={16} />工作区</SideLink>
            <SideLink><ClockIcon />待完成项</SideLink>
            <SideLink><PlayIcon />待执行操作</SideLink>
            <SideLink><UndoIcon s={16} />撤消历史</SideLink>
          </SideLinks>
        </Side>
      </Dock>

      <Status>
        <Interface>&lt;没有接口被选择&gt;<UpButton aria-label="展开"><UpCaret /></UpButton></Interface>
        <StatusCell $w={409}>1.1 新建支线 (项目)</StatusCell>
        <StatusCell $w={408}>别墅1</StatusCell>
        <StatusCell $w={409} />
        <StatusCell $w={270}>最后使用的工作区</StatusCell>
        <StatusCell $w={45} />
      </Status>

      <Taskbar>
        <Scenery width="640" height="38" viewBox="1329 1042 640 38">
          <defs><filter id="soft"><feGaussianBlur stdDeviation="2.500" /></filter></defs>
          <g filter="url(#soft)">
            <path d="M1358 1049q25-4 32 11-22 2-32-11z" fill="#7eb08c" />
            <path d="M1388 1072q10-22 44-17-10 24-44 17z" fill="#6aa581" />
            <path d="M1420 1080q8-22 34-24l22 4-10 22z" fill="#3a8fbb" />
            <path d="M1472 1082l14-22h22l-8 22zM1512 1082q4-24 30-22l-6 22zM1548 1082q6-22 36-22l34-6-14 16-20 14z" fill="#2c7fa9" opacity=".75" />
          </g>
        </Scenery>
        <Launchers>
          <IconButton aria-label="开始"><StartOrb /></IconButton>
          <IconButton aria-label="浏览器"><Petals /></IconButton>
          <NewsBar>
            <NewsText href="#"><IeIcon /><UpCaret />这才是真传世，元...</NewsText>
            <NewsButton>搜索一下</NewsButton>
          </NewsBar>
        </Launchers>
        <Running>
          <TaskButton $open aria-label="ETS5"><EtsLarge /></TaskButton>
          <TaskButton $open aria-label="Chrome"><ChromeIcon /></TaskButton>
          <TaskButton aria-label="截图工具"><Snip /></TaskButton>
        </Running>
        <Tray>
          <Notifications />
          <Clock>19:32<br />2024/5/28</Clock>
          <ShowDesktop aria-label="显示桌面" />
        </Tray>
        <Watermark>CSDN @serein101261</Watermark>
      </Taskbar>

      <Meter />
      <Ink width="170" height="270" viewBox="0 0 170 270" fill="none" stroke="#f00" strokeWidth="1.500" strokeLinecap="round">
        <path d="M7 98.500C25 98.500 41 100 42 112C42 120 30 128 17 136.500L47 136.500" />
        <path d="M44 128C70 132 85 135 100 133C118 131 124 118 126 106C127 101 118 99 105 98C80 96 60 97 50 100C42 103 36 108 38 114C40 122 52 128 57 131C60 133 62 135 63 137" />
        <path d="M62.500 241.500C50 238 38 225 38 205C38 201 60 200 100 199C130 199 157 206 156.500 215C155 225 145 233 135 238C120 246 95 243 80 240C70 236 60 236 52 236" />
        <path d="M6.500 212C7 225 5 245 1.500 258" />
      </Ink>
    </Page>
  );
}
